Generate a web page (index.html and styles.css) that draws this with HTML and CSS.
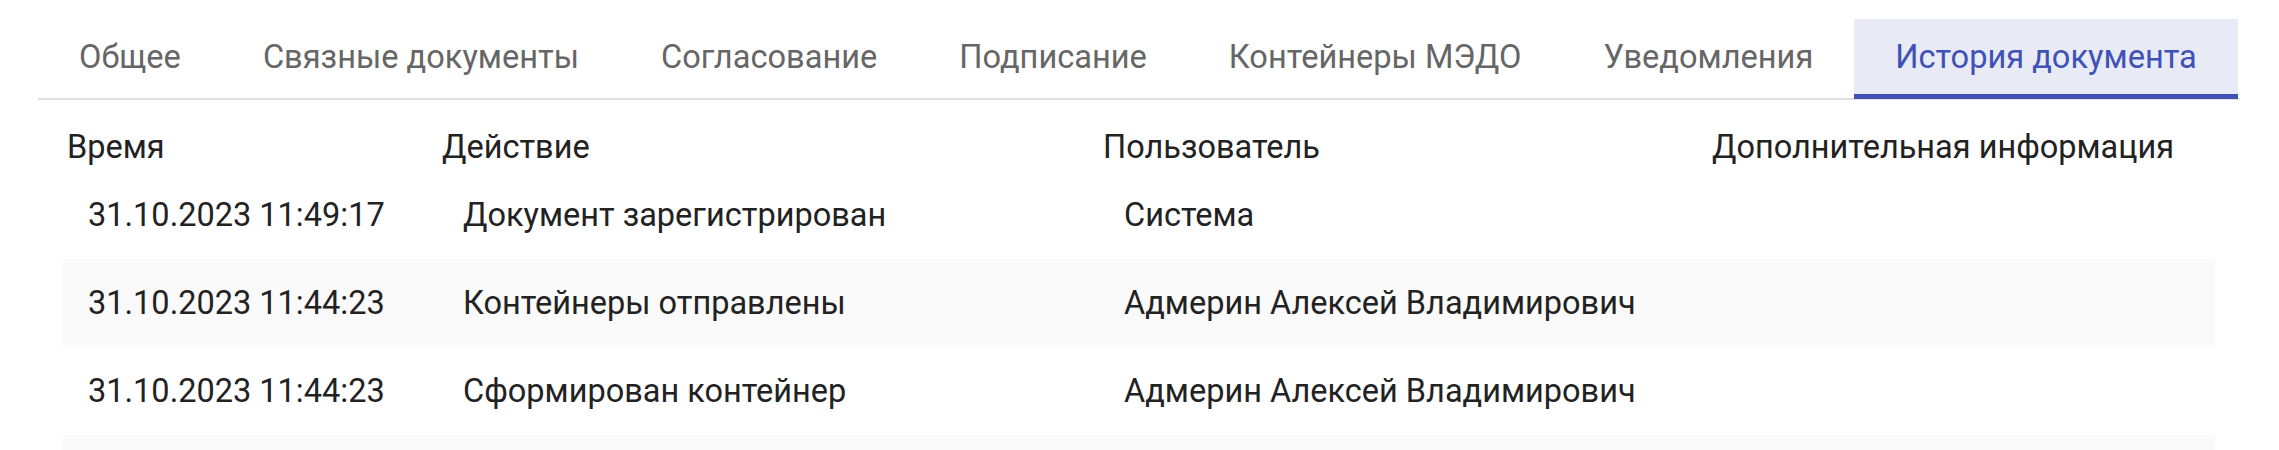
FILE: index.html
```html
<!DOCTYPE html>
<html lang="ru">
<head>
<meta charset="utf-8">
<link rel="stylesheet" href="styles.css">
</head>
<body>
<div class="page">
  <nav class="tabs">
    <div class="tab">Общее</div>
    <div class="tab">Связные документы</div>
    <div class="tab">Согласование</div>
    <div class="tab">Подписание</div>
    <div class="tab">Контейнеры МЭДО</div>
    <div class="tab">Уведомления</div>
    <div class="tab tab-active">История документа</div>
  </nav>
  <div class="table">
    <div class="row head">
      <div class="cell">Время</div>
      <div class="cell">Действие</div>
      <div class="cell">Пользователь</div>
      <div class="cell">Дополнительная информация</div>
    </div>
    <div class="row body">
      <div class="cell">31.10.2023 11:49:17</div>
      <div class="cell">Документ зарегистрирован</div>
      <div class="cell">Система</div>
      <div class="cell"></div>
    </div>
    <div class="row body striped">
      <div class="cell">31.10.2023 11:44:23</div>
      <div class="cell">Контейнеры отправлены</div>
      <div class="cell">Адмерин Алексей Владимирович</div>
      <div class="cell"></div>
    </div>
    <div class="row body">
      <div class="cell">31.10.2023 11:44:23</div>
      <div class="cell">Сформирован контейнер</div>
      <div class="cell">Адмерин Алексей Владимирович</div>
      <div class="cell"></div>
    </div>
    <div class="row body striped">
      <div class="cell"></div>
      <div class="cell"></div>
      <div class="cell"></div>
      <div class="cell"></div>
    </div>
  </div>
</div>
</body>
</html>
```

FILE: styles.css
```css
html, body {
  margin: 0;
  padding: 0;
  background: #ffffff;
}

body {
  font-family: Roboto, "Noto Sans", sans-serif;
}

.page {
  padding-top: 19px;
  height: 431px;
  overflow: hidden;
}

.tabs {
  display: flex;
  margin-left: 38px;
  width: 2202px;
  border-bottom: 2px solid #e0e0e0;
}

.tab {
  height: 75px;
  padding: 0 41px;
  display: flex;
  align-items: center;
  font-size: 32.6px;
  color: #666666;
  border-bottom: 5px solid transparent;
  margin-bottom: -1px;
  white-space: nowrap;
}

.tab-active {
  background: #e8eaf6;
  color: #3f51b5;
  border-bottom-color: #3f51b5;
}

.table {
  margin-left: 63px;
  width: 2152px;
}

.row {
  display: grid;
  grid-template-columns: 375px 661px 609px 1fr;
  font-size: 32.5px;
  line-height: 38px;
  color: #222222;
}

.head {
  padding: 28px 0 5px 4px;
}

.body {
  height: 88px;
  align-items: center;
  padding-left: 25px;
}

.striped {
  background: #fafafa;
}

.cell {
  white-space: nowrap;
}
```
